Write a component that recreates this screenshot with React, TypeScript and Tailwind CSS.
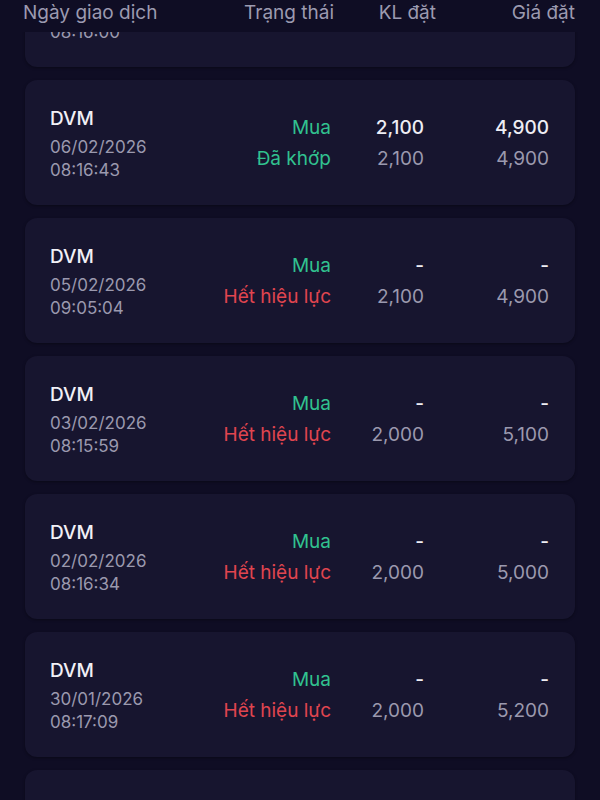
import React from "react";

type Order = {
  code: string;
  date: string;
  time: string;
  side: string;
  status: string;
  matched: boolean;
  qty: string;
  price: string;
  orderQty: string;
  orderPrice: string;
};

const orders: Order[] = [
  { code: "DVM", date: "09/02/2026", time: "08:16:00", side: "Mua", status: "Hết hiệu lực", matched: false, qty: "-", price: "-", orderQty: "2,100", orderPrice: "4,900" },
  { code: "DVM", date: "06/02/2026", time: "08:16:43", side: "Mua", status: "Đã khớp", matched: true, qty: "2,100", price: "4,900", orderQty: "2,100", orderPrice: "4,900" },
  { code: "DVM", date: "05/02/2026", time: "09:05:04", side: "Mua", status: "Hết hiệu lực", matched: false, qty: "-", price: "-", orderQty: "2,100", orderPrice: "4,900" },
  { code: "DVM", date: "03/02/2026", time: "08:15:59", side: "Mua", status: "Hết hiệu lực", matched: false, qty: "-", price: "-", orderQty: "2,000", orderPrice: "5,100" },
  { code: "DVM", date: "02/02/2026", time: "08:16:34", side: "Mua", status: "Hết hiệu lực", matched: false, qty: "-", price: "-", orderQty: "2,000", orderPrice: "5,000" },
  { code: "DVM", date: "30/01/2026", time: "08:17:09", side: "Mua", status: "Hết hiệu lực", matched: false, qty: "-", price: "-", orderQty: "2,000", orderPrice: "5,200" },
  { code: "DVM", date: "29/01/2026", time: "08:15:12", side: "Mua", status: "Hết hiệu lực", matched: false, qty: "-", price: "-", orderQty: "2,000", orderPrice: "5,200" },
];

function OrderCard({ o }: { o: Order }) {
  return (
    <div className="flex h-[125px] shrink-0 rounded-[12px] bg-[#17152f] pl-[25px] pr-[26px] shadow-[0_1px_3px_rgba(0,0,0,0.35)]">
      <div className="min-w-0 flex-1 pt-[27px]">
        <p className="text-[19px] leading-[24px] font-medium text-[#f1f0f6]">{o.code}</p>
        <p className="mt-[5px] text-[17px] leading-[23px] text-[#9b99ae]">{o.date}</p>
        <p className="text-[17px] leading-[23px] text-[#9b99ae]">{o.time}</p>
      </div>
      <div className="w-[140px] pt-[32px] text-right text-[19px] leading-[31px]">
        <p className="text-[#31c28f]">{o.side}</p>
        <p className={o.matched ? "whitespace-nowrap text-[#31c28f]" : "whitespace-nowrap text-[#e0454f]"}>{o.status}</p>
      </div>
      <div className="w-[93px] pt-[32px] text-right text-[19px] leading-[31px]">
        <p className="font-medium text-[#eeedf4]">{o.qty}</p>
        <p className="text-[#9b99ae]">{o.orderQty}</p>
      </div>
      <div className="w-[125px] pt-[32px] text-right text-[19px] leading-[31px]">
        <p className="font-medium text-[#eeedf4]">{o.price}</p>
        <p className="text-[#9b99ae]">{o.orderPrice}</p>
      </div>
    </div>
  );
}

export default function App() {
  return (
    <div
      className="h-[800px] w-[600px] overflow-hidden bg-[#0f0d24]"
      style={{ fontFamily: "Inter, 'Noto Sans', sans-serif" }}
    >
      <div className="relative z-10 flex h-[32px] bg-[#0f0d24] pl-[23px] pt-[1px] text-[19px] leading-[24px] text-[#9c9ab0]">
        <span className="w-[201px]">Ngày giao dịch</span>
        <span className="w-[110px] text-right">Trạng thái</span>
        <span className="w-[102px] text-right">KL đặt</span>
        <span className="w-[139px] text-right">Giá đặt</span>
      </div>
      <div className="-mt-[90px] flex flex-col gap-[13px] px-[25px]">
        {orders.map((o, i) => (
          <OrderCard key={i} o={o} />
        ))}
      </div>
    </div>
  );
}
